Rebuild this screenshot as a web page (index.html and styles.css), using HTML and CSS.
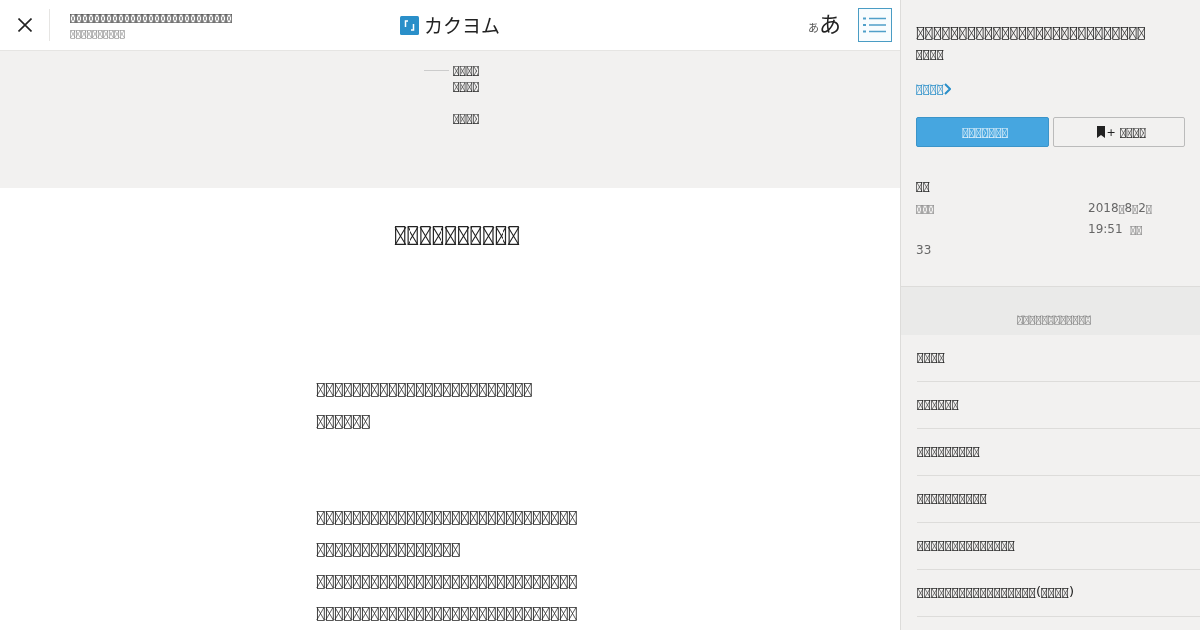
FILE: index.html
```html
<!DOCTYPE html>
<html lang="ja">
<head>
    <meta charset="UTF-8">
    <title>カクヨム</title>
    <link rel="stylesheet" href="styles.css">
</head>
<body>
    <div id="reader">
        <div id="main">
            <div id="header">
                <div class="close">
                    <svg width="14" height="14" viewBox="0 0 14 14"><path d="M0.5 0.5L13.5 13.5M13.5 0.5L0.5 13.5" stroke="#222" stroke-width="1.6" fill="none"/></svg>
                </div>
                <div class="work">
                    <div class="work-title"><span class="x">&#xE000;&#xE000;&#xE000;&#xE000;&#xE000;&#xE000;&#xE000;&#xE000;&#xE000;&#xE000;&#xE000;&#xE000;&#xE000;&#xE000;&#xE000;&#xE000;&#xE000;&#xE000;&#xE000;&#xE000;&#xE000;&#xE000;&#xE000;&#xE000;&#xE000;&#xE000;&#xE000;</span></div>
                    <div class="work-author"><span class="x gray">&#xE000;&#xE000;&#xE000;&#xE000;&#xE000;&#xE000;&#xE000;&#xE000;&#xE000;&#xE000;</span></div>
                </div>
                <div class="logo">
                    <svg width="19" height="19" viewBox="0 0 19 19"><rect width="19" height="19" rx="1.5" fill="#2a8fc9"/><path d="M8 5H5.5V11M11 14H13.5V8" stroke="#fff" stroke-width="1.5" fill="none"/></svg>
                    <span>カクヨム</span>
                </div>
                <div class="font-size"><small>あ</small>あ</div>
                <div class="toc-btn">
                    <svg width="24" height="16" viewBox="0 0 24 16"><path d="M6 1.5H23M6 8H23M6 14.5H23" stroke="#4f9fc9" stroke-width="1.5"/><path d="M0 1.5H3M0 8H3M0 14.5H3" stroke="#4f9fc9" stroke-width="2"/></svg>
                </div>
            </div>
            <div id="band">
                <div class="band-row"><span class="rule"></span><span class="x">&#xE000;&#xE000;&#xE000;&#xE000;</span></div>
                <div class="band-row"><span class="rule none"></span><span class="x">&#xE000;&#xE000;&#xE000;&#xE000;</span></div>
                <div class="band-row gap"><span class="rule none"></span><span class="x">&#xE000;&#xE000;&#xE000;&#xE000;</span></div>
            </div>
            <div id="content">
                <h1><span class="x">&#xE000;&#xE000;&#xE000;&#xE000;&#xE000;&#xE000;&#xE000;&#xE000;&#xE000;&#xE000;</span></h1>
                <p><span class="x">&#xE000;&#xE000;&#xE000;&#xE000;&#xE000;&#xE000;&#xE000;&#xE000;&#xE000;&#xE000;&#xE000;&#xE000;&#xE000;&#xE000;&#xE000;&#xE000;&#xE000;&#xE000;&#xE000;&#xE000;&#xE000;&#xE000;&#xE000;&#xE000;</span></p>
                <p><span class="x">&#xE000;&#xE000;&#xE000;&#xE000;&#xE000;&#xE000;</span></p>
                <p class="blank"></p>
                <p class="blank"></p>
                <p><span class="x">&#xE000;&#xE000;&#xE000;&#xE000;&#xE000;&#xE000;&#xE000;&#xE000;&#xE000;&#xE000;&#xE000;&#xE000;&#xE000;&#xE000;&#xE000;&#xE000;&#xE000;&#xE000;&#xE000;&#xE000;&#xE000;&#xE000;&#xE000;&#xE000;&#xE000;&#xE000;&#xE000;&#xE000;&#xE000;</span></p>
                <p><span class="x">&#xE000;&#xE000;&#xE000;&#xE000;&#xE000;&#xE000;&#xE000;&#xE000;&#xE000;&#xE000;&#xE000;&#xE000;&#xE000;&#xE000;&#xE000;&#xE000;</span></p>
                <p><span class="x">&#xE000;&#xE000;&#xE000;&#xE000;&#xE000;&#xE000;&#xE000;&#xE000;&#xE000;&#xE000;&#xE000;&#xE000;&#xE000;&#xE000;&#xE000;&#xE000;&#xE000;&#xE000;&#xE000;&#xE000;&#xE000;&#xE000;&#xE000;&#xE000;&#xE000;&#xE000;&#xE000;&#xE000;&#xE000;</span></p>
                <p><span class="x">&#xE000;&#xE000;&#xE000;&#xE000;&#xE000;&#xE000;&#xE000;&#xE000;&#xE000;&#xE000;&#xE000;&#xE000;&#xE000;&#xE000;&#xE000;&#xE000;&#xE000;&#xE000;&#xE000;&#xE000;&#xE000;&#xE000;&#xE000;&#xE000;&#xE000;&#xE000;&#xE000;&#xE000;&#xE000;</span></p>
            </div>
        </div>
        <div id="side">
            <div class="side-top">
                <div class="side-title"><span class="x">&#xE000;&#xE000;&#xE000;&#xE000;&#xE000;&#xE000;&#xE000;&#xE000;&#xE000;&#xE000;&#xE000;&#xE000;&#xE000;&#xE000;&#xE000;&#xE000;&#xE000;&#xE000;&#xE000;&#xE000;&#xE000;&#xE000;&#xE000;&#xE000;&#xE000;&#xE000;&#xE000;</span></div>
                <div class="side-sub"><span class="x">&#xE000;&#xE000;&#xE000;&#xE000;</span></div>
                <div class="side-link"><span class="x blue">&#xE000;&#xE000;&#xE000;&#xE000;</span><svg width="7" height="12" viewBox="0 0 7 12"><path d="M1 1L6 6L1 11" stroke="#2a8fc9" stroke-width="2" fill="none"/></svg></div>
                <div class="btns">
                    <div class="btn primary"><span class="x pale">&#xE000;&#xE000;&#xE000;&#xE000;&#xE000;&#xE000;&#xE000;</span></div>
                    <div class="btn">
                        <svg width="8" height="12" viewBox="0 0 8 12"><path d="M0 0H8V12L4 9L0 12Z" fill="#222"/></svg><span class="plus">+</span><span class="x">&#xE000;&#xE000;&#xE000;&#xE000;</span>
                    </div>
                </div>
                <div class="info-head"><span class="x">&#xE000;&#xE000;</span></div>
                <div class="info">
                    <div><span class="x gray t">&#xE000;&#xE000;&#xE000;</span></div>
                    <div>2018<span class="x gray t">&#xE000;</span>8<span class="x gray t">&#xE000;</span>2<span class="x gray t">&#xE000;</span><br>19:51&nbsp;&nbsp;<span class="x gray t">&#xE000;&#xE000;</span></div>
                    <div>33</div>
                </div>
            </div>
            <div class="toc-head"><span class="x gray">&#xE000;&#xE000;&#xE000;&#xE000;&#xE000;&#xE000;&#xE000;&#xE000;&#xE000;&#xE000;&#xE000;&#xE000;</span></div>
            <ul class="toc">
                <li><span class="x">&#xE000;&#xE000;&#xE000;&#xE000;</span></li>
                <li><span class="x">&#xE000;&#xE000;&#xE000;&#xE000;&#xE000;&#xE000;</span></li>
                <li><span class="x">&#xE000;&#xE000;&#xE000;&#xE000;&#xE000;&#xE000;&#xE000;&#xE000;&#xE000;</span></li>
                <li><span class="x">&#xE000;&#xE000;&#xE000;&#xE000;&#xE000;&#xE000;&#xE000;&#xE000;&#xE000;&#xE000;</span></li>
                <li><span class="x">&#xE000;&#xE000;&#xE000;&#xE000;&#xE000;&#xE000;&#xE000;&#xE000;&#xE000;&#xE000;&#xE000;&#xE000;&#xE000;&#xE000;</span></li>
                <li><span class="x">&#xE000;&#xE000;&#xE000;&#xE000;&#xE000;&#xE000;&#xE000;&#xE000;&#xE000;&#xE000;&#xE000;&#xE000;&#xE000;&#xE000;&#xE000;&#xE000;&#xE000;</span><span class="par">(</span><span class="x">&#xE000;&#xE000;&#xE000;&#xE000;</span><span class="par">)</span></li>
            </ul>
        </div>
    </div>
</body>
</html>
```

FILE: styles.css
```css
*{
    margin:0;
    padding:0;
    box-sizing:border-box;
}
html,body{
    height:100%;
    overflow:hidden;
}
body{
    font-family:"DejaVu Sans",sans-serif;
    color:#222;
    background:#fff;
}
#reader{
    display:flex;
    height:630px;
    overflow:hidden;
    will-change:transform;
}

/* cross inside each missing-glyph box */
.x{
    background-image:url("data:image/svg+xml,%3Csvg xmlns='http://www.w3.org/2000/svg' viewBox='0 0 60 88' preserveAspectRatio='none'%3E%3Cpath d='M5 0L55 88M55 0L5 88' stroke='%23222' stroke-width='5' fill='none'/%3E%3C/svg%3E");
    background-size:.6em .88em;
    background-position:0 .22em;
    background-repeat:repeat-x;
}
.x.gray{
    color:#777;
    background-image:url("data:image/svg+xml,%3Csvg xmlns='http://www.w3.org/2000/svg' viewBox='0 0 60 88' preserveAspectRatio='none'%3E%3Cpath d='M5 0L55 88M55 0L5 88' stroke='%23777' stroke-width='5' fill='none'/%3E%3C/svg%3E");
}
.x.blue{
    background-image:url("data:image/svg+xml,%3Csvg xmlns='http://www.w3.org/2000/svg' viewBox='0 0 60 88' preserveAspectRatio='none'%3E%3Cpath d='M5 0L55 88M55 0L5 88' stroke='%232a8fc9' stroke-width='5' fill='none'/%3E%3C/svg%3E");
}
.x.pale{
    background-image:url("data:image/svg+xml,%3Csvg xmlns='http://www.w3.org/2000/svg' viewBox='0 0 60 88' preserveAspectRatio='none'%3E%3Cpath d='M5 0L55 88M55 0L5 88' stroke='%23e8f4fb' stroke-width='5' fill='none'/%3E%3C/svg%3E");
}

/* left column */
#main{
    width:900px;
    flex:none;
}
#header{
    height:51px;
    display:flex;
    align-items:center;
    border-bottom:1px solid #e6e5e3;
    padding-right:8px;
}
.close{
    width:50px;
    height:32px;
    display:flex;
    align-items:center;
    justify-content:center;
    border-right:1px solid #e6e5e3;
    flex:none;
}
.work{
    width:330px;
    padding:4px 0 0 20px;
    flex:none;
}
.work-title{
    font-size:10px;
    line-height:14px;
}
.work-author{
    font-size:9.2px;
    line-height:18px;
}
.logo{
    display:flex;
    align-items:center;
    gap:5px;
    margin-left:20px;
    flex:none;
}
.logo span{
    font-family:"Noto Sans CJK JP",sans-serif;
    font-size:19px;
    margin-bottom:2px;
}
.font-size{
    font-family:"Noto Sans CJK JP",sans-serif;
    font-size:22px;
    line-height:30px;
    margin:0 17px 2px auto;
}
.font-size small{
    font-size:11px;
    color:#555;
}
.toc-btn{
    width:34px;
    height:34px;
    border:1px solid #4a9cc4;
    background:#f8fcfe;
    display:flex;
    align-items:center;
    justify-content:center;
}
#band{
    height:137px;
    background:#f2f1f0;
    font-size:11px;
    padding-top:11px;
}
.band-row{
    display:flex;
    align-items:center;
    gap:4px;
    height:16px;
    padding-left:424px;
}
.band-row.gap{
    margin-top:16px;
}
.rule{
    width:25px;
    height:1px;
    background:#ccc;
    flex:none;
}
.rule.none{
    background:none;
}
#content{
    padding-left:316px;
}
#content h1{
    font-size:21px;
    font-weight:normal;
    line-height:30px;
    margin-top:31px;
    margin-left:78px;
    margin-bottom:124px;
}
#content p{
    font-size:15px;
    line-height:32px;
    min-height:32px;
}

/* right column */
#side{
    flex:1;
    background:#f2f1f0;
    border-left:1px solid #dddcda;
    overflow:hidden;
}
.side-top{
    padding:21px 15px 0;
    height:287px;
    border-bottom:1px solid #dddcda;
}
.side-title{
    font-size:14.17px;
    line-height:22px;
    white-space:nowrap;
}
.side-sub{
    font-size:11.67px;
    line-height:22px;
}
.side-link{
    font-size:11.67px;
    color:#2a8fc9;
    margin-top:16px;
    line-height:16px;
    display:flex;
    align-items:center;
}
.btns{
    display:flex;
    gap:4px;
    margin-top:20px;
    width:269px;
}
.btn{
    height:30px;
    flex:1;
    font-size:11px;
    border:1px solid #bbb;
    border-radius:2px;
    padding-left:6px;
    display:flex;
    align-items:center;
    justify-content:center;
}
.btn.primary{
    background:#46a6e0;
    border-color:#3b94c9;
    color:#e8f4fb;
}
.plus{
    margin:0 4px 0 1px;
}
.info-head{
    font-size:11.67px;
    font-weight:bold;
    margin-top:31px;
    line-height:16px;
}
.info{
    font-size:12px;
    color:#666;
    line-height:21px;
    margin-top:4px;
    display:grid;
    grid-template-columns:172px 1fr;
}
.t{
    font-size:10px;
}
.toc-head{
    height:48px;
    background:#eaeae9;
    padding:24px 0 0 7px;
    font-size:10.3px;
    line-height:16px;
    text-align:center;
}
.toc{
    list-style:none;
    margin-left:16px;
}
.toc li{
    height:47px;
    line-height:44px;
    font-size:11.67px;
    border-bottom:1px solid #dddcda;
}
.par{
    font-size:13px;
}
```
